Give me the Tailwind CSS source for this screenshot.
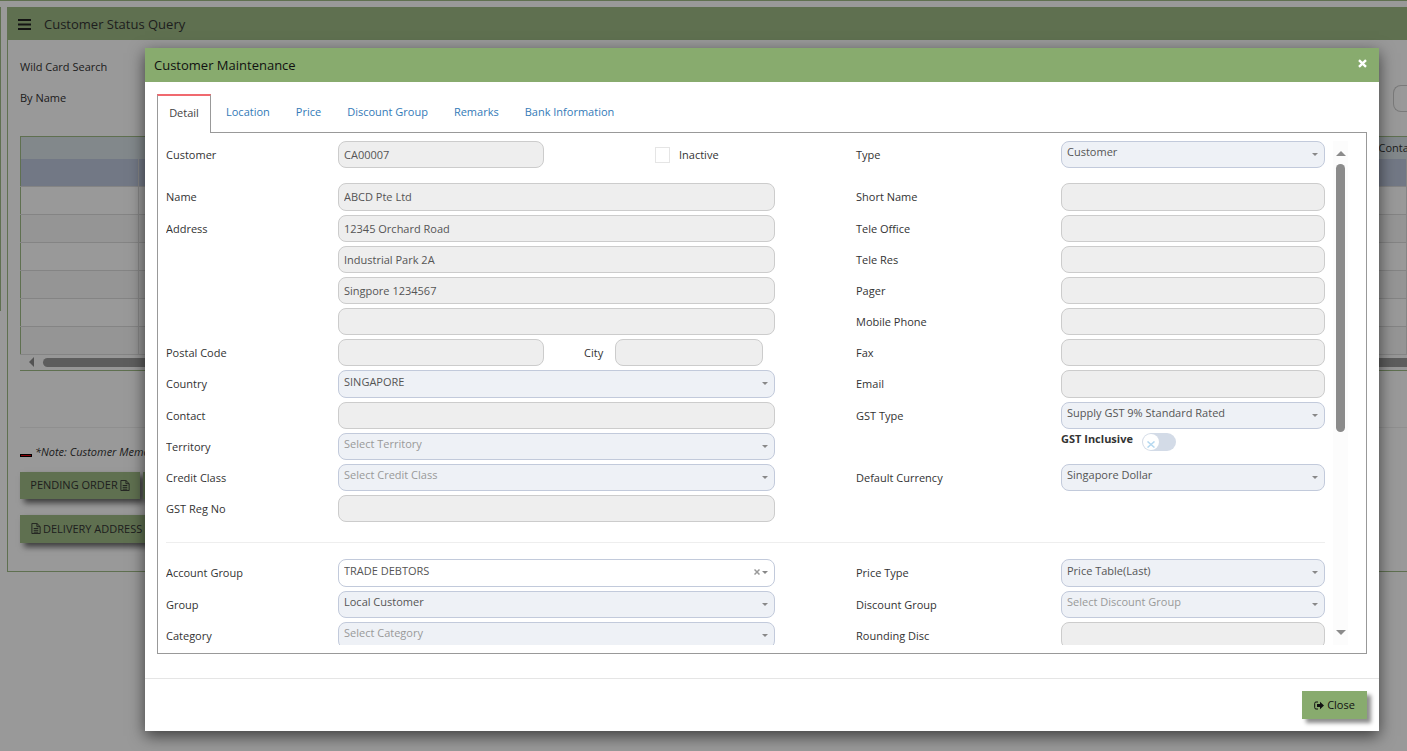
<!DOCTYPE html>
<html lang="en">
<head>
  <meta charset="UTF-8">
  <meta name="viewport" content="width=device-width, initial-scale=1.0">
  <title>Customer Status Query</title>
  <script src="https://cdn.jsdelivr.net/npm/@tailwindcss/browser@4"></script>
</head>
<body class="relative h-screen overflow-hidden bg-white font-['Open_Sans','Noto_Sans',sans-serif] text-[11px] leading-4 text-[#333]">

  <!-- Customer status query page -->
  <div class="flex h-full flex-col border-t border-[#9ebb86] pt-[6px]">
    <div class="flex">
      <div class="h-[304px] w-[7px] border-l border-[#9ebb86]"></div>
      <main class="min-w-0 flex-1 border-b border-l border-[#9ebb86]">
        <header class="flex h-[33px] items-center gap-[13px] bg-[#9ebb86] pt-px pl-[10px]">
          <button type="button" aria-label="Menu">
            <svg class="h-[13px] w-[13px]" viewBox="0 0 13 13" fill="#222"><path d="M0 1h13v2H0zM0 5.5h13v2H0zM0 10h13v2H0z"/></svg>
          </button>
          <h1 class="text-[13px]">Customer Status Query</h1>
        </header>

        <div class="pl-3">
          <div class="mt-[19px] flex flex-col gap-[15px]">
            <label for="wildCard">Wild Card Search</label>
            <div class="flex h-4 items-center justify-between">
              <label for="byName">By Name</label>
              <input id="byName" type="text" class="h-[27px] w-[14px] rounded-l-lg border border-r-0 border-[#ccc] bg-white">
            </div>
          </div>

          <div class="mt-[30px] border-y border-[#9ebb86]">
            <table class="w-full table-fixed border-l border-[#9ebb86]">
              <colgroup><col class="w-[118px]"><col><col class="w-[30px]"></colgroup>
              <thead>
                <tr class="h-[22px] bg-[#d9e3e8] text-left">
                  <th></th>
                  <th></th>
                  <th class="pl-[2px] font-medium whitespace-nowrap">Conta</th>
                </tr>
              </thead>
              <tbody class="[&_td]:border-r [&_td]:border-b [&_td]:border-[#ddd]">
                <tr class="h-[27px] bg-[#bec8de]"><td></td><td></td><td></td></tr>
                <tr class="h-[28px]"><td></td><td></td><td></td></tr>
                <tr class="h-[28px] bg-[#f9f9f9]"><td></td><td></td><td></td></tr>
                <tr class="h-[28px]"><td></td><td></td><td></td></tr>
                <tr class="h-[28px] bg-[#f9f9f9]"><td></td><td></td><td></td></tr>
                <tr class="h-[28px]"><td></td><td></td><td></td></tr>
                <tr class="h-[28px] bg-[#f9f9f9]"><td></td><td></td><td></td></tr>
              </tbody>
            </table>
            <div class="flex h-[15px] items-center gap-[9px] bg-[#fcfcfc] pl-[9px]">
              <span class="border-y-5 border-r-5 border-y-transparent border-r-[#8b8b8b]"></span>
              <span class="h-[9px] flex-1 rounded-l-full bg-[#9c9c9c]"></span>
            </div>
          </div>

          <hr class="mt-14 border-[#eee]">

          <p class="mt-4 flex items-center gap-[3px] italic"><span class="mt-[7px] h-[3px] w-3 border border-black bg-red-600"></span>*Note: Customer Memo</p>

          <div class="mt-3 flex gap-[3px]">
            <button type="button" class="flex h-[27px] w-[120px] items-center justify-center gap-[2px] bg-[#9ebb86] whitespace-nowrap shadow-[4px_4px_6px_rgba(0,0,0,0.6)]">PENDING ORDER
              <svg class="h-[11px] w-[10px]" viewBox="0 0 10 12" fill="none" stroke="#333"><path d="M.5.5h5.500l3.500 3.500v7.500h-9zM6 .5V4h3.500M2.500 6h5M2.500 8h5M2.500 10h5"/></svg>
            </button>
            <button type="button" class="h-[27px] w-20 bg-[#9ebb86] shadow-[4px_4px_6px_rgba(0,0,0,0.6)]" aria-label="Orders"></button>
          </div>
          <button type="button" class="mt-4 mb-7 flex h-7 w-[134px] items-center gap-[2px] bg-[#9ebb86] pl-[11px] whitespace-nowrap shadow-[4px_4px_6px_rgba(0,0,0,0.6)]">
            <svg class="h-[11px] w-[10px]" viewBox="0 0 10 12" fill="none" stroke="#333"><path d="M.5.5h5.500l3.500 3.500v7.500h-9zM6 .5V4h3.500M2.500 6h5M2.500 8h5M2.500 10h5"/></svg>
            DELIVERY ADDRESS
          </button>
        </div>
      </main>
    </div>
  </div>

  <div class="absolute inset-0 bg-black/40"></div>

  <!-- Customer maintenance dialog -->
  <section role="dialog" aria-labelledby="dialogTitle" class="absolute top-12 right-7 bottom-5 left-[145px] flex flex-col bg-white shadow-[0_5px_15px_rgba(0,0,0,0.6)]">
    <header class="flex h-[34px] shrink-0 items-center justify-between bg-[#88ab6e] pr-3 pl-[9px]">
      <h2 id="dialogTitle" class="text-[13px] text-[#111]">Customer Maintenance</h2>
      <button type="button" aria-label="Close dialog">
        <svg class="mb-1 h-[9px] w-[9px]" viewBox="0 0 9 9" stroke="#fff" stroke-width="2.400"><path d="M1 1.200l7 6.600M8 1.200L1 7.800"/></svg>
      </button>
    </header>

    <div class="flex min-h-0 flex-1 flex-col px-3 pt-3 pb-6">
      <nav class="relative -mb-px flex h-[39px] gap-[26px] text-[#337ab7] [&>a]:flex [&>a]:items-center [&>a]:pb-1">
        <a href="#" class="-mr-[11px] w-[54px] justify-center border-x border-t-2 border-x-[#999] border-t-[#f0696f] bg-white text-[#444]">Detail</a>
        <a href="#">Location</a>
        <a href="#">Price</a>
        <a href="#">Discount Group</a>
        <a href="#">Remarks</a>
        <a href="#">Bank Information</a>
      </nav>

      <div class="flex min-h-0 flex-1 gap-2 border border-[#999] py-2 pr-[18px] pl-2">
        <form class="min-h-0 flex-1 overflow-hidden
          [&_.row]:mb-1 [&_.row]:grid [&_.row]:grid-cols-[172fr_437fr_81fr_205fr_264fr]
          [&_.row>label]:mt-[6px] [&_.right]:col-start-4
          [&_.field]:block [&_.field]:h-[27px] [&_.field]:w-full [&_.field]:appearance-none [&_.field]:rounded-lg [&_.field]:border [&_.field]:border-[#ccc] [&_.field]:bg-[#eee] [&_.field]:px-[5px] [&_.field]:text-[#555] [&_.field]:opacity-100
          [&_.pick]:relative [&_.pick>select]:border-[#c2cadb] [&_.pick>select]:bg-[#eef1f6] [&_.pick>select]:pb-[5px]
          [&_.pick]:after:absolute [&_.pick]:after:top-3 [&_.pick]:after:right-[7px] [&_.pick]:after:border-x-3 [&_.pick]:after:border-t-3 [&_.pick]:after:border-x-transparent [&_.pick]:after:border-t-[#888]">
          <div class="row !mb-[15px]">
            <label for="customer">Customer</label>
            <div class="flex items-center">
              <input id="customer" class="field !w-[206px]" type="text" value="CA00007" disabled>
              <input id="inactive" type="checkbox" class="ml-[111px] h-4 w-[15px] appearance-none border border-[#e5e5e5]">
              <label for="inactive" class="ml-[9px]">Inactive</label>
            </div>
            <label for="type" class="right">Type</label>
            <div class="pick"><select id="type" class="field" disabled><option>Customer</option></select></div>
          </div>

          <div class="row">
            <label for="name">Name</label>
            <input id="name" class="field !h-7 pb-px" type="text" value="ABCD Pte Ltd" disabled>
            <label for="shortName" class="right">Short Name</label>
            <input id="shortName" class="field !h-7" type="text" disabled>
          </div>
          <div class="row">
            <label for="address1">Address</label>
            <input id="address1" class="field" type="text" value="12345 Orchard Road" disabled>
            <label for="teleOffice" class="right">Tele Office</label>
            <input id="teleOffice" class="field" type="text" disabled>
          </div>
          <div class="row">
            <input aria-label="Address line 2" class="field col-start-2" type="text" value="Industrial Park 2A" disabled>
            <label for="teleRes" class="right">Tele Res</label>
            <input id="teleRes" class="field" type="text" disabled>
          </div>
          <div class="row">
            <input aria-label="Address line 3" class="field col-start-2" type="text" value="Singpore 1234567" disabled>
            <label for="pager" class="right">Pager</label>
            <input id="pager" class="field" type="text" disabled>
          </div>
          <div class="row">
            <input aria-label="Address line 4" class="field col-start-2" type="text" disabled>
            <label for="mobile" class="right">Mobile Phone</label>
            <input id="mobile" class="field" type="text" disabled>
          </div>
          <div class="row">
            <label for="postal">Postal Code</label>
            <div class="flex items-center">
              <input id="postal" class="field !w-[206px]" type="text" disabled>
              <label for="city" class="ml-10 w-[31px]">City</label>
              <input id="city" class="field !w-[148px]" type="text" disabled>
            </div>
            <label for="fax" class="right">Fax</label>
            <input id="fax" class="field" type="text" disabled>
          </div>

          <div class="row">
            <label for="country">Country</label>
            <div class="pick"><select id="country" class="field !h-7" disabled><option>SINGAPORE</option></select></div>
            <label for="email" class="right">Email</label>
            <input id="email" class="field !h-7" type="text" disabled>
          </div>
          <div class="row">
            <label for="contact">Contact</label>
            <input id="contact" class="field" type="text" disabled>
            <label for="gstType" class="right">GST Type</label>
            <div class="pick"><select id="gstType" class="field" disabled><option>Supply GST 9% Standard Rated</option></select></div>
          </div>
          <div class="row">
            <label for="territory">Territory</label>
            <div class="pick"><select id="territory" class="field !text-[#999]" disabled><option>Select Territory</option></select></div>
            <div class="col-start-5 flex items-start">
              <label for="gstInclusive" class="-mt-[2px] w-[81px] font-bold">GST Inclusive</label>
              <div class="relative h-[18px] w-[34px]">
                <input id="gstInclusive" type="checkbox" role="switch" class="block h-full w-full appearance-none rounded-full bg-[#d3dbe7]" disabled>
                <span class="absolute top-px left-px flex h-4 w-4 items-center justify-center rounded-full bg-white">
                  <svg class="mt-[5px] h-[7px] w-[8px]" viewBox="0 0 8 7" stroke="#b5d8f0" stroke-width="1.500"><path d="M.5.5l7 6M7.500.5l-7 6"/></svg>
                </span>
              </div>
            </div>
          </div>
          <div class="row">
            <label for="creditClass">Credit Class</label>
            <div class="pick"><select id="creditClass" class="field !text-[#999]" disabled><option>Select Credit Class</option></select></div>
            <label for="currency" class="right">Default Currency</label>
            <div class="pick"><select id="currency" class="field" disabled><option>Singapore Dollar</option></select></div>
          </div>
          <div class="row">
            <label for="gstReg">GST Reg No</label>
            <input id="gstReg" class="field" type="text" disabled>
          </div>

          <hr class="mt-5 mb-4 border-[#eee]">

          <div class="row">
            <label for="accountGroup">Account Group</label>
            <div class="pick">
              <select id="accountGroup" class="field !h-7 !bg-white"><option>TRADE DEBTORS</option></select>
              <button type="button" aria-label="Clear account group" class="absolute top-[10px] right-[15px]">
                <svg class="h-[6px] w-[6px]" viewBox="0 0 6 6" stroke="#999" stroke-width="1.500"><path d="M.5.5l5 5M5.500.5l-5 5"/></svg>
              </button>
            </div>
            <label for="priceType" class="right">Price Type</label>
            <div class="pick"><select id="priceType" class="field !h-7" disabled><option>Price Table(Last)</option></select></div>
          </div>
          <div class="row">
            <label for="group">Group</label>
            <div class="pick"><select id="group" class="field" disabled><option>Local Customer</option></select></div>
            <label for="discountGroup" class="right">Discount Group</label>
            <div class="pick"><select id="discountGroup" class="field !text-[#999]" disabled><option>Select Discount Group</option></select></div>
          </div>
          <div class="row">
            <label for="category">Category</label>
            <div class="pick"><select id="category" class="field !text-[#999]" disabled><option>Select Category</option></select></div>
            <label for="rounding" class="right">Rounding Disc</label>
            <input id="rounding" class="field" type="text" disabled>
          </div>
        </form>

        <!-- Scroll bar -->
        <div class="flex w-[15px] flex-col items-center bg-[#fcfcfc] pt-[10px] pb-[10px]">
          <span class="border-x-5 border-b-5 border-x-transparent border-b-[#8b8b8b]"></span>
          <span class="mt-2 h-[268px] w-[9px] rounded-full bg-[#8b8b8b]"></span>
          <span class="mt-auto border-x-5 border-t-5 border-x-transparent border-t-[#8b8b8b]"></span>
        </div>
      </div>
    </div>

    <footer class="flex h-[53px] shrink-0 justify-end border-t border-[#e5e5e5] px-3 pt-3">
      <button type="button" class="flex h-7 w-[65px] items-center justify-center gap-[3px] bg-[#88ab6e] text-[#111] shadow-[4px_4px_4px_rgba(0,0,0,0.45)]">
        <svg class="h-[9px] w-[10px]" viewBox="0 0 10 9"><path d="M4 1H2Q.7 1 .7 2.300v4.400Q.7 8 2 8h2" fill="none" stroke="#111"/><path d="M3 3h3V.8L10 4.500 6 8.200V6H3z" fill="#111"/></svg>
        Close
      </button>
    </footer>
  </section>
</body>
</html>
